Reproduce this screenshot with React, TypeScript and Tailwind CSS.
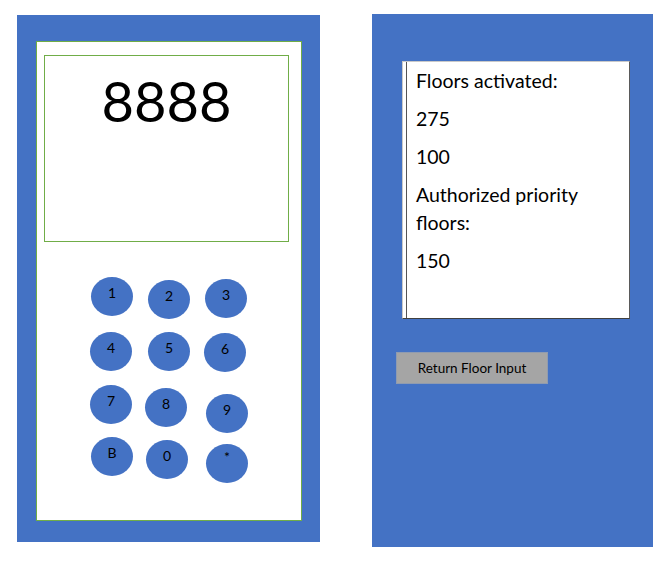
import React from "react";

const F = { fontFamily: "Lato, 'Open Sans', sans-serif" };

function Key({ label, cls }: { label: string; cls: string }) {
  return (
    <div
      className={`w-[42px] h-[39px] rounded-[50%] bg-[#4472c4] flex items-center justify-center pb-[8px] text-[14px] text-black shrink-0 ${cls}`}
    >
      {label}
    </div>
  );
}

export default function App() {
  return (
    <div className="w-[668px] h-[562px] bg-white flex items-start" style={F}>
      {/* Left panel */}
      <div className="ml-[17px] mt-[15px] w-[303px] h-[527px] bg-[#4472c4] pl-[19px] pt-[26px]">
        <div className="w-[266px] h-[480px] bg-white border border-[#70ad47] pl-[7px] pt-[13px]">
          <div className="w-[245px] h-[187px] border border-[#70ad47] flex justify-center">
            <div className="text-[56px] leading-none mt-[17px] text-black">8888</div>
          </div>
          <div className="mt-[35px] ml-[46px] flex flex-col">
            <div className="h-[55px] flex items-start">
              <Key label="1" cls="ml-[1px]" />
              <Key label="2" cls="ml-[15px] mt-[3px]" />
              <Key label="3" cls="ml-[15px] mt-[2px]" />
            </div>
            <div className="h-[53px] flex items-start">
              <Key label="4" cls="" />
              <Key label="5" cls="ml-[16px]" />
              <Key label="6" cls="ml-[14px] mt-[1px]" />
            </div>
            <div className="h-[52px] flex items-start">
              <Key label="7" cls="" />
              <Key label="8" cls="ml-[13px] mt-[3px]" />
              <Key label="9" cls="ml-[19px] mt-[9px]" />
            </div>
            <div className="h-[46px] flex items-start">
              <Key label="B" cls="ml-[1px]" />
              <Key label="0" cls="ml-[13px] mt-[3px]" />
              <Key label="*" cls="ml-[18px] mt-[7px] pb-[14px] text-[14px]" />
            </div>
          </div>
        </div>
      </div>

      {/* Right panel */}
      <div className="ml-[52px] mt-[14px] w-[281px] h-[533px] bg-[#4472c4] pl-[30px] pt-[47px]">
        <div className="w-[228px] h-[258px] bg-white border-t border-l border-t-[#c9c9c9] border-l-[#c9c9c9] border-r border-b border-r-[#5a5a5a] border-b-[#404040] pl-[3px]">
          <div className="h-full border-l border-[#555555] pl-[9px] pt-[5px] text-[19.5px] leading-[28px] text-black">
            <p>Floors activated:</p>
            <p className="mt-[10px]">275</p>
            <p className="mt-[10px]">100</p>
            <p className="mt-[10px] w-[195px]">Authorized priority floors:</p>
            <p className="mt-[10px]">150</p>
          </div>
        </div>
        <div className="mt-[33px] ml-[-6px] w-[152px] h-[32px] bg-[#a5a5a5] border border-[#8f9bb0] flex items-center justify-center text-[13.5px] text-black">
          Return Floor Input
        </div>
      </div>
    </div>
  );
}
